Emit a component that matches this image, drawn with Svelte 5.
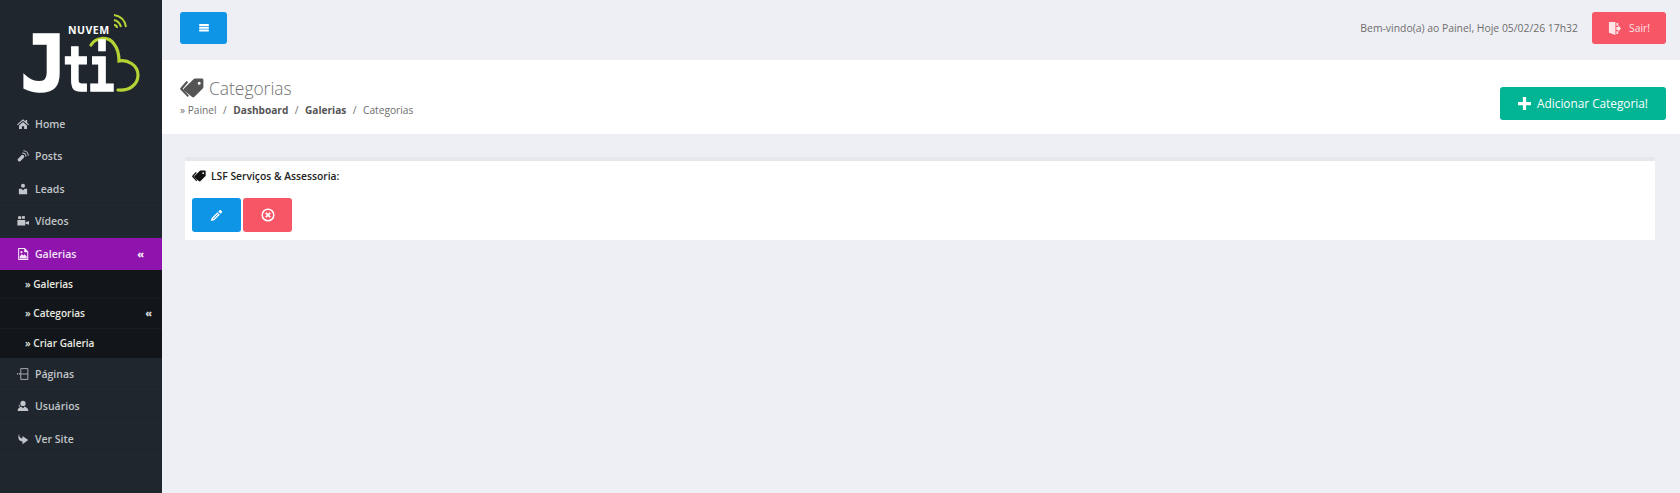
<script>
	const menu = [
		{ label: 'Home', icon: 'home' },
		{ label: 'Posts', icon: 'posts' },
		{ label: 'Leads', icon: 'leads' },
		{ label: 'Vídeos', icon: 'videos' },
		{ label: 'Galerias', icon: 'gallery', active: true },
		{ label: 'Páginas', icon: 'pages' },
		{ label: 'Usuários', icon: 'users' },
		{ label: 'Ver Site', icon: 'share' }
	];
	const submenu = [
		{ label: 'Galerias' },
		{ label: 'Categorias', open: true },
		{ label: 'Criar Galeria' }
	];
</script>

{#snippet tags()}
	<svg viewBox="0 0 24 20" fill="currentColor" aria-hidden="true">
		<path d="M1 10.5 10.5 1.2c.4-.4.9-.6 1.4-.6H19c.8 0 1.4.6 1.4 1.4v7c0 .6-.2 1-.6 1.4l-8.600 8.600c-.6.6-1.4.6-2 0L1 12.500c-.6-.6-.6-1.400 0-2Zm15.200-6.800a1.500 1.500 0 1 0 0 3 1.500 1.500 0 0 0 0-3Z" fill-rule="evenodd" transform="translate(3 0)" />
		<path d="M6.500 3 0.600 9.700c-.6.700-.6 1.500 0 2.100l7 7.200 1.400-1.200-6.300-7 5.500-6.500Z" />
	</svg>
{/snippet}

{#snippet icon(name)}
	<svg class="nav-icon" viewBox="0 0 16 16" fill="currentColor" aria-hidden="true">
		{#if name === 'home'}
			<path d="M8 1.500 0 8.500l1 1.200L8 3.700l7 6 1-1.200-2.500-2.200V2.500h-2v2Z" />
			<path d="M2.700 10 8 5.300l5.300 4.700v4.800H9.500V11h-3v3.800H2.700Z" />
		{:else if name === 'posts'}
			<path d="M1.500 15 .8 12.200l4.800-5c1-1 2.700-.9 3.500.1.800.9.700 2.300-.2 3.200L4 15.300Z" />
			<path d="M7 4c2.900 0 5 2.200 5 5M8.500 1c3.700 0 6.500 2.800 6.500 6.500" fill="none" stroke="currentColor" stroke-width="1.400" />
		{:else if name === 'leads'}
			<circle cx="8" cy="3.700" r="2.700" />
			<path d="M2.500 7.500h3.300L8 9.700l2.200-2.200h3.300V15h-11Z" />
		{:else if name === 'videos'}
			<circle cx="3.500" cy="3.500" r="2.300" />
			<path d="M6.500 1.500h4v3.500h-4Z" />
			<path d="M.5 6.500h10.500V14H.5ZM11.500 9.500 16 8v5l-4.500-1.500Z" />
		{:else if name === 'gallery'}
			<path fill-rule="evenodd" d="M1.500 0h9L15 4.500V16H1.500Zm1.400 1.400v13.200h10.700V5.500H9.500V1.400Z" />
			<path d="M3.500 14v-2.500l3-3.500 2 2 1.700-1.700 2.800 3V14Z" />
			<circle cx="6" cy="5.500" r="1.400" />
		{:else if name === 'pages'}
			<path fill="none" stroke="currentColor" stroke-width="1.100" d="M5 .8h9.500v14.400H5ZM5 8h9.500" />
			<path d="M0 7h1.600v1.800H0ZM2.700 7h1.600v1.800H2.700Z" />
		{:else if name === 'users'}
			<circle cx="8" cy="4.500" r="3.500" />
			<path d="M5.500 8.500C3 9.500 1.500 11 1 13v1.500h14V13c-.6-2-2.300-3.500-4.800-4.500L8 11Z" />
			<path d="M4 5.500c-.5 1-1 2-2.500 2.500L4 9Z" />
		{:else}
			<path d="M3 1c-.5 3.500.8 6 4.300 6.300V4L15 9.300l-7.700 5.700v-3.600C3 11 0 7 3 1Z" />
		{/if}
	</svg>
{/snippet}

<div class="layout">
	<aside class="sidebar">
		<div class="logo">
			<svg viewBox="0 0 162 108" width="162" height="108" role="img" aria-label="Nuvem JTI">
				<path d="M91 45C95 38 108 35 114 44 118 49 119 55 119 61 127 59 138 65 138 75 138 85 129 91 118 90" fill="none" stroke="#b5d334" stroke-width="3.200" stroke-linecap="round" />
				<path d="M114 15c6 1 11 5 12 12M114 20c4 1 6 3 7 7M114 25c2 0 3 1 3 3" fill="none" stroke="#b5d334" stroke-width="2" />
				<text x="68" y="34" class="logo-small">NUVEM</text>
				<text transform="translate(20 90.500)" class="logo-big">J</text>
				<text transform="translate(63 90.500) scale(.72 1)" class="logo-big logo-rest">ti</text>
			</svg>
		</div>

		<nav class="nav">
			{#each menu as item}
				<a class="nav-row" class:active={item.active} href="#top">
					{@render icon(item.icon)}
					<span>{item.label}</span>
					{#if item.active}
						<b class="nav-arrow">«</b>
					{/if}
				</a>
				{#if item.active}
					<div class="sub">
						{#each submenu as sub}
							<a class="sub-row" href="#top">
								<span>» {sub.label}</span>
								{#if sub.open}
									<b class="sub-arrow">«</b>
								{/if}
							</a>
						{/each}
					</div>
				{/if}
			{/each}
		</nav>
	</aside>

	<main class="main">
		<header class="topbar">
			<button class="btn btn-blue toggle" aria-label="Menu">
				<svg viewBox="0 0 12 10" width="10" height="8" fill="currentColor">
					<path d="M0 0h12v2.400H0ZM0 3.500h12v2.400H0ZM0 7h12v2.400H0Z" />
				</svg>
			</button>
			<div class="welcome">Bem-vindo(a) ao Painel, Hoje 05/02/26 17h32</div>
			<button class="btn btn-red logout">
				<svg viewBox="0 0 14 14" width="13" height="13" fill="currentColor">
					<path d="M1 0h7v14L1 11.500ZM9 1h2v3H9ZM9 10h2v3H9ZM9 5.500h2V3.500L14 7l-3 3.500v-2H9Z" />
				</svg>
				Sair!
			</button>
		</header>

		<section class="page-head">
			<div>
				<h1>
					<span class="head-icon">{@render tags()}</span>
					Categorias
				</h1>
				<div class="crumbs">
					<span>» Painel</span>
					<i>/</i>
					<b>Dashboard</b>
					<i>/</i>
					<b>Galerias</b>
					<i>/</i>
					<span>Categorias</span>
				</div>
			</div>
			<button class="btn btn-green add">
				<svg viewBox="0 0 12 12" width="13" height="13" fill="currentColor">
					<path d="M4.500 0h3v4.500H12v3H7.500V12h-3V7.500H0v-3h4.500Z" />
				</svg>
				Adicionar Categoria!
			</button>
		</section>

		<section class="content">
			<article class="card">
				<h2>
					<span class="card-icon">{@render tags()}</span>
					LSF Serviços &amp; Assessoria:
				</h2>
				<div class="actions">
					<button class="btn btn-blue action" aria-label="Editar">
						<svg viewBox="0 0 14 14" width="13" height="13" fill="currentColor">
							<path d="M10 1.500c.6-.6 1.500-.6 2 0l.600.6c.6.600.6 1.400 0 2L11.500 5.200 8.900 2.600ZM8 3.500 10.600 6.100 4.500 12.200 1 13l.8-3.400ZM8.200 5.300 3.300 10.200l.5.500 4.900-4.900Z" fill-rule="evenodd" />
						</svg>
					</button>
					<button class="btn btn-red action" aria-label="Excluir">
						<svg viewBox="0 0 14 14" width="14" height="14" fill="none" stroke="currentColor">
							<circle cx="7" cy="7" r="5.800" stroke-width="1.500" />
							<path d="M4.800 4.800l4.400 4.400M9.200 4.800l-4.400 4.400" stroke-width="1.800" />
						</svg>
					</button>
				</div>
			</article>
		</section>
	</main>
</div>

<style>
	:global(body) {
		margin: 0;
		background: #eeeff4;
		font-family: 'Open Sans', sans-serif;
	}

	.layout {
		display: flex;
		min-height: 100vh;
	}

	.sidebar {
		width: 162px;
		flex-shrink: 0;
		background: #1f262d;
		box-sizing: border-box;
	}

	.logo {
		height: 108px;
	}

	.logo svg {
		display: block;
	}

	.logo-small {
		font-family: 'Open Sans', sans-serif;
		font-size: 10.500px;
		font-weight: 700;
		letter-spacing: 0.5px;
		fill: #fff;
	}

	.logo-big {
		font-family: 'DejaVu Sans Mono', monospace;
		font-size: 79px;
		font-weight: 700;
		fill: #fff;
		stroke: #fff;
		stroke-width: 1.500px;
	}

	.logo-rest {
		font-size: 62px;
		letter-spacing: -3px;
	}

	.nav-row {
		display: flex;
		align-items: center;
		gap: 6px;
		height: 32.500px;
		padding: 0 18px 0 17px;
		box-sizing: border-box;
		border-bottom: 1px solid #222930;
		color: #c2c5c9;
		font-size: 10.500px;
		font-weight: 600;
		text-decoration: none;
	}

	.nav-row.active {
		height: 32px;
		background: #8e14ad;
		color: #f2e6f6;
		border-bottom: 0;
	}

	.nav-icon {
		width: 12px;
		height: 12px;
		flex-shrink: 0;
	}

	.nav-arrow {
		margin-left: auto;
		font-size: 10px;
	}

	.sub {
		background: #12161a;
	}

	.sub-row {
		display: flex;
		align-items: center;
		justify-content: space-between;
		height: 29.300px;
		padding: 0 10px 0 25px;
		box-sizing: border-box;
		border-bottom: 1px solid #191d22;
		color: #e8e8e0;
		font-size: 10.100px;
		font-weight: 600;
		text-decoration: none;
	}

	.sub-row:last-child {
		border-bottom: 0;
	}

	.sub-arrow {
		font-size: 10px;
		color: #d5d8da;
	}

	.main {
		flex: 1;
		min-width: 0;
	}

	.topbar {
		display: flex;
		align-items: center;
		height: 60px;
		padding: 0 14px 4px 18px;
		box-sizing: border-box;
	}

	.welcome {
		margin-left: auto;
		margin-right: 14px;
		color: #6d6d6d;
		font-size: 10.400px;
	}

	.btn {
		display: inline-flex;
		align-items: center;
		justify-content: center;
		gap: 6px;
		padding: 0;
		border: 0;
		border-radius: 3px;
		color: #fff;
		font-family: inherit;
	}

	.btn-blue {
		background: #0f95e6;
	}

	.btn-red {
		background: #f75667;
	}

	.btn-green {
		background: #00b494;
	}

	.toggle {
		width: 47px;
		height: 32px;
	}

	.logout {
		width: 74px;
		height: 32px;
		font-size: 10.400px;
		color: #fde4e6;
		gap: 8px;
	}

	.page-head {
		display: flex;
		align-items: center;
		justify-content: space-between;
		height: 74px;
		padding: 0 14px 0 18px;
		box-sizing: border-box;
		background: #fff;
	}

	h1 {
		display: flex;
		align-items: center;
		gap: 5px;
		margin: 0 0 2px;
		color: #707070;
		font-size: 17.400px;
		font-weight: 300;
		line-height: 24px;
	}

	.head-icon {
		display: flex;
		color: #555;
	}

	.head-icon svg {
		width: 24px;
		height: 20px;
	}

	.crumbs {
		display: flex;
		gap: 6.500px;
		color: #6e6e6e;
		font-size: 10.200px;
		line-height: 16px;
	}

	.crumbs i {
		font-style: normal;
	}

	.crumbs b {
		font-weight: 700;
		font-size: 10.100px;
		color: #555;
	}

	.add {
		width: 166px;
		height: 33px;
		font-size: 11.800px;
		margin-top: 12px;
	}

	.content {
		padding: 23px 25px 0 23px;
	}

	.card {
		height: 83px;
		box-sizing: border-box;
		padding: 5px 7px 0;
		background: #fff;
		border-top: 4px solid #e6e7ec;
	}

	h2 {
		display: flex;
		align-items: center;
		gap: 5px;
		margin: 0;
		height: 20px;
		color: #222;
		font-size: 10.300px;
		font-weight: 600;
	}

	.card-icon {
		display: flex;
		color: #111;
	}

	.card-icon svg {
		width: 14px;
		height: 12px;
	}

	.actions {
		display: flex;
		gap: 2px;
		margin-top: 12px;
	}

	.action {
		width: 49px;
		height: 34px;
	}
</style>
